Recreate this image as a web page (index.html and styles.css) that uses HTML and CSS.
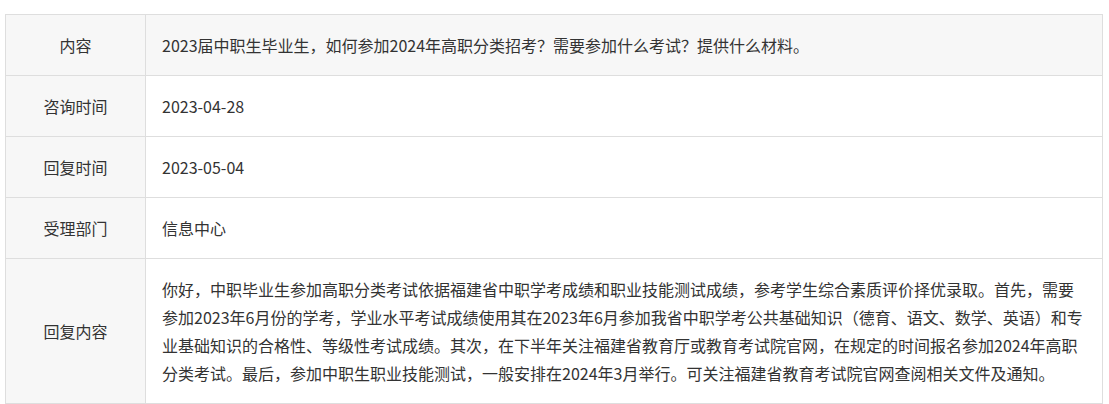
FILE: index.html
```html
<!DOCTYPE html>
<html>
<head>
    <meta charset="utf-8">
    <link rel="stylesheet" href="styles.css">
</head>
<body>

<div class="wrap">
    <table class="detail">
        <tr class="first">
            <th>内容</th>
            <td>2023届中职生毕业生，如何参加2024年高职分类招考？需要参加什么考试？提供什么材料。</td>
        </tr>
        <tr>
            <th>咨询时间</th>
            <td>2023-04-28</td>
        </tr>
        <tr>
            <th>回复时间</th>
            <td>2023-05-04</td>
        </tr>
        <tr>
            <th>受理部门</th>
            <td>信息中心</td>
        </tr>
        <tr>
            <th>回复内容</th>
            <td>你好，中职毕业生参加高职分类考试依据福建省中职学考成绩和职业技能测试成绩，参考学生综合素质评价择优录取。首先，需要参加2023年6月份的学考，学业水平考试成绩使用其在2023年6月参加我省中职学考公共基础知识（德育、语文、数学、英语）和专业基础知识的合格性、等级性考试成绩。其次，在下半年关注福建省教育厅或教育考试院官网，在规定的时间报名参加2024年高职分类考试。最后，参加中职生职业技能测试，一般安排在2024年3月举行。可关注福建省教育考试院官网查阅相关文件及通知。</td>
        </tr>
    </table>
</div>

</body>
</html>
```

FILE: styles.css
```css
* {
    box-sizing: border-box;
}

body {
    margin: 0;
    background: #fff;
    font-family: "Noto Sans CJK SC", "Liberation Sans", sans-serif;
    color: #333;
}

.wrap {
    padding: 14px 7px 0 5px;
}

.detail {
    width: 1098px;
    border-collapse: collapse;
    font-size: 16px;
    line-height: 28px;
}

.detail th,
.detail td {
    border: 1px solid #dedede;
    padding: 16px;
    vertical-align: middle;
}

.detail th {
    width: 140px;
    background-color: #f7f7f7;
    font-weight: normal;
    text-align: center;
}

.detail td {
    text-align: left;
}

.detail .first td {
    background-color: #f7f7f7;
}
```
